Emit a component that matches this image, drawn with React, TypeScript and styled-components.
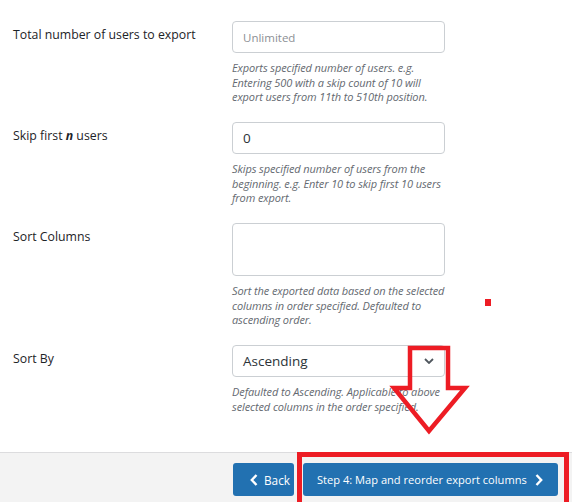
import React from 'react';
import styled, { createGlobalStyle } from 'styled-components';

const GlobalStyle = createGlobalStyle`
  html, body {
    margin: 0;
    padding: 0;
    background: #fff;
    overflow: hidden;
  }
  body {
    font-family: "Open Sans", "Noto Sans", "Liberation Sans", sans-serif;
    color: #1d2327;
  }
`;

const Page = styled.div`
  position: relative;
  width: 572px;
  height: 502px;
  display: flex;
  flex-direction: column;
  overflow: hidden;
`;

const Content = styled.div`
  flex: 1;
  min-height: 0;
  display: flex;
  flex-direction: column;
  gap: 17.5px;
  padding-left: 13px;
  margin-top: -11px;
`;

const Row = styled.div`
  display: grid;
  grid-template-columns: 219px 213px;
`;

const Label = styled.div`
  padding-top: 5px;
  font-size: 12.3px;
  line-height: 18px;
  color: #1d2327;
`;

const Field = styled.div`
  display: flex;
  flex-direction: column;
  gap: 8px;
`;

const TextInput = styled.input`
  box-sizing: border-box;
  width: 213px;
  height: 32px;
  padding: 0 10px;
  border: 1px solid #cbcfd3;
  border-radius: 4px;
  font-family: inherit;
  font-size: 13.5px;
  color: #2c3338;
  background: #fff;
  outline: none;

  &::placeholder {
    font-size: 11.5px;
    color: #8c8f94;
  }
`;

const TextArea = styled.textarea`
  box-sizing: border-box;
  width: 213px;
  height: 53px;
  border: 1px solid #cbcfd3;
  border-radius: 4px;
  resize: none;
  outline: none;
  display: block;
`;

const SelectBox = styled.div`
  box-sizing: border-box;
  width: 213px;
  height: 32px;
  padding: 0 10px;
  border: 1px solid #cbcfd3;
  border-radius: 4px;
  display: flex;
  align-items: center;
  justify-content: space-between;
  font-size: 13.5px;
  color: #2c3338;
`;

const Desc = styled.p`
  margin: 0;
  font-size: 11px;
  font-style: italic;
  line-height: 14.5px;
  letter-spacing: -0.1px;
  color: #646970;
`;

const Footer = styled.div`
  flex: 0 0 50px;
  box-sizing: border-box;
  border-top: 1px solid #dcdcde;
  background: #f3f3f3;
  display: flex;
  justify-content: flex-end;
  align-items: flex-start;
  gap: 9px;
  padding: 10px 14px 0 0;
`;

const Button = styled.button<{ $wide?: boolean }>`
  box-sizing: border-box;
  height: 33px;
  width: ${p => (p.$wide ? '255px' : '61px')};
  padding: ${p => (p.$wide ? '0 15px 0 14px' : '0 4px 0 17px')};
  border: none;
  border-radius: 3px;
  background: #2271b1;
  color: #fff;
  font-family: inherit;
  font-size: ${p => (p.$wide ? '11.1px' : '11.8px')};
  white-space: nowrap;
  display: flex;
  align-items: center;
  justify-content: space-between;
  cursor: pointer;
`;

const Overlay = styled.svg`
  position: absolute;
  left: 0;
  top: 0;
  pointer-events: none;
`;

const Chevron = ({ dir }: { dir: 'left' | 'right' }) => (
  <svg width="8" height="12" viewBox="0 0 8 12">
    <polyline
      points={dir === 'left' ? '6.5,1 1.8,6 6.5,11' : '1.5,1 6.2,6 1.5,11'}
      fill="none"
      stroke="#fff"
      strokeWidth="2.4"
    />
  </svg>
);

const App: React.FC = () => {
  return (
    <>
      <GlobalStyle />
      <Page>
        <Content>
          <Row>
            <div />
            <Desc>data.</Desc>
          </Row>

          <Row>
            <Label>Total number of users to export</Label>
            <Field>
              <TextInput placeholder="Unlimited" />
              <Desc>
                Exports specified number of users. e.g. Entering 500 with a skip count of 10 will
                export users from 11th to 510th position.
              </Desc>
            </Field>
          </Row>

          <Row>
            <Label>
              Skip first <b><i>n</i></b> users
            </Label>
            <Field>
              <TextInput defaultValue="0" />
              <Desc>
                Skips specified number of users from the beginning. e.g. Enter 10 to skip first 10
                users from export.
              </Desc>
            </Field>
          </Row>

          <Row>
            <Label>Sort Columns</Label>
            <Field>
              <TextArea />
              <Desc>
                Sort the exported data based on the selected columns in order specified. Defaulted
                to ascending order.
              </Desc>
            </Field>
          </Row>

          <Row>
            <Label>Sort By</Label>
            <Field>
              <SelectBox>
                <span>Ascending</span>
                <svg width="10" height="6" viewBox="0 0 10 6">
                  <polyline points="1,1 5,5 9,1" fill="none" stroke="#50575e" strokeWidth="1.8" />
                </svg>
              </SelectBox>
              <Desc>
                Defaulted to Ascending. Applicable to above selected columns in the order specified.
              </Desc>
            </Field>
          </Row>
        </Content>

        <Footer>
          <Button>
            <Chevron dir="left" />
            Back
          </Button>
          <Button $wide>
            Step 4: Map and reorder export columns
            <Chevron dir="right" />
          </Button>
        </Footer>

        {/* red annotations drawn over the screenshot */}
        <Overlay width="572" height="502" viewBox="0 0 572 502">
          <rect x="485" y="299" width="6" height="7" fill="#ed1c24" />
          <polygon
            points="410,348 448,348 448,388 465,388 429,431 394,388 410,388"
            fill="none"
            stroke="#ed1c24"
            strokeWidth="4.5"
            strokeLinejoin="miter"
          />
          <rect x="299.5" y="454.5" width="267" height="52" fill="none" stroke="#ed1c24" strokeWidth="5" />
        </Overlay>
      </Page>
    </>
  );
};

export default App;
